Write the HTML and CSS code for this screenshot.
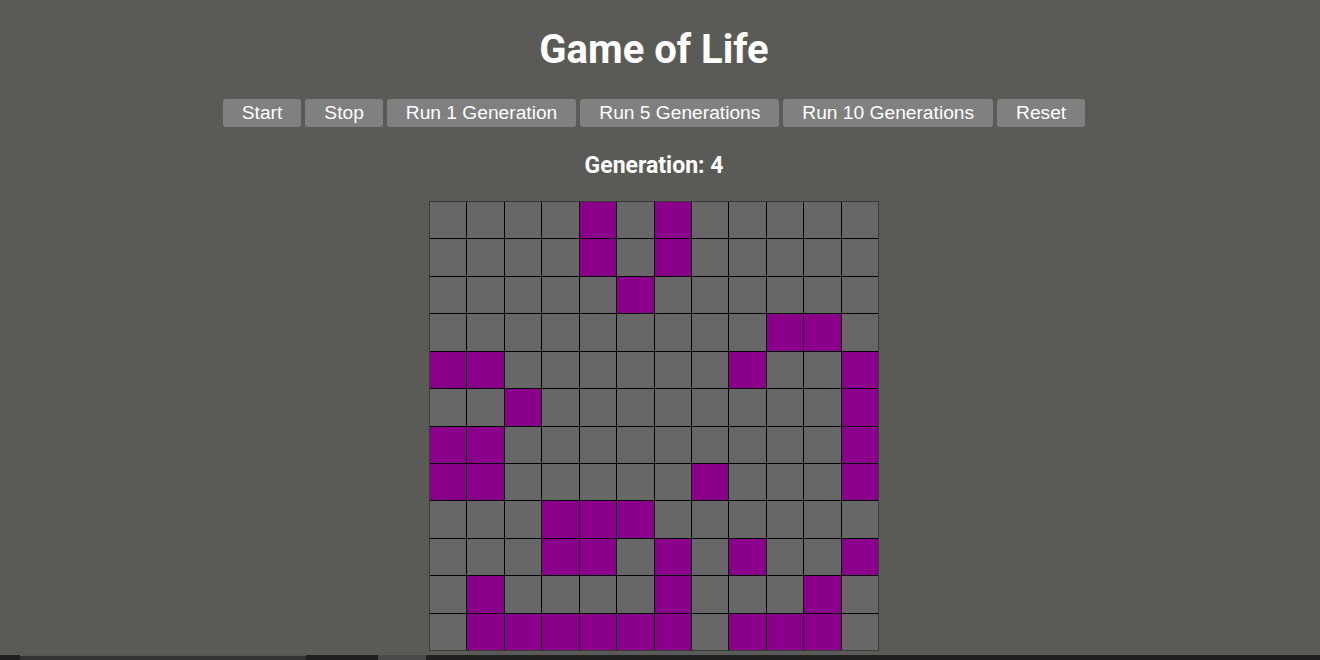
FILE: index.html
```html
<!DOCTYPE html>
<html lang="en">
<head>
<meta charset="utf-8">
<title>Game of Life</title>
<link rel="stylesheet" href="styles.css">
</head>
<body>
<div class="app">
  <h1 class="title">Game of Life</h1>
  <div class="controls">
    <button class="btn">Start</button>
    <button class="btn">Stop</button>
    <button class="btn">Run 1 Generation</button>
    <button class="btn">Run 5 Generations</button>
    <button class="btn">Run 10 Generations</button>
    <button class="btn">Reset</button>
  </div>
  <h3 class="generation">Generation: 4</h3>
  <div class="board">
    <div class="c"></div><div class="c"></div><div class="c"></div><div class="c"></div><div class="c on"></div><div class="c"></div><div class="c on"></div><div class="c"></div><div class="c"></div><div class="c"></div><div class="c"></div><div class="c"></div>
    <div class="c"></div><div class="c"></div><div class="c"></div><div class="c"></div><div class="c on"></div><div class="c"></div><div class="c on"></div><div class="c"></div><div class="c"></div><div class="c"></div><div class="c"></div><div class="c"></div>
    <div class="c"></div><div class="c"></div><div class="c"></div><div class="c"></div><div class="c"></div><div class="c on"></div><div class="c"></div><div class="c"></div><div class="c"></div><div class="c"></div><div class="c"></div><div class="c"></div>
    <div class="c"></div><div class="c"></div><div class="c"></div><div class="c"></div><div class="c"></div><div class="c"></div><div class="c"></div><div class="c"></div><div class="c"></div><div class="c on"></div><div class="c on"></div><div class="c"></div>
    <div class="c on"></div><div class="c on"></div><div class="c"></div><div class="c"></div><div class="c"></div><div class="c"></div><div class="c"></div><div class="c"></div><div class="c on"></div><div class="c"></div><div class="c"></div><div class="c on"></div>
    <div class="c"></div><div class="c"></div><div class="c on"></div><div class="c"></div><div class="c"></div><div class="c"></div><div class="c"></div><div class="c"></div><div class="c"></div><div class="c"></div><div class="c"></div><div class="c on"></div>
    <div class="c on"></div><div class="c on"></div><div class="c"></div><div class="c"></div><div class="c"></div><div class="c"></div><div class="c"></div><div class="c"></div><div class="c"></div><div class="c"></div><div class="c"></div><div class="c on"></div>
    <div class="c on"></div><div class="c on"></div><div class="c"></div><div class="c"></div><div class="c"></div><div class="c"></div><div class="c"></div><div class="c on"></div><div class="c"></div><div class="c"></div><div class="c"></div><div class="c on"></div>
    <div class="c"></div><div class="c"></div><div class="c"></div><div class="c on"></div><div class="c on"></div><div class="c on"></div><div class="c"></div><div class="c"></div><div class="c"></div><div class="c"></div><div class="c"></div><div class="c"></div>
    <div class="c"></div><div class="c"></div><div class="c"></div><div class="c on"></div><div class="c on"></div><div class="c"></div><div class="c on"></div><div class="c"></div><div class="c on"></div><div class="c"></div><div class="c"></div><div class="c on"></div>
    <div class="c"></div><div class="c on"></div><div class="c"></div><div class="c"></div><div class="c"></div><div class="c"></div><div class="c on"></div><div class="c"></div><div class="c"></div><div class="c"></div><div class="c on"></div><div class="c"></div>
    <div class="c"></div><div class="c on"></div><div class="c on"></div><div class="c on"></div><div class="c on"></div><div class="c on"></div><div class="c on"></div><div class="c"></div><div class="c on"></div><div class="c on"></div><div class="c on"></div><div class="c"></div>
  </div>
</div>
<div class="strip">
  <span class="seg seg-a"></span>
  <span class="seg seg-b"></span>
</div>
</body>
</html>
```
FILE: styles.css
```css
html, body {
  margin: 0;
  padding: 0;
  background: #5a5b56;
}

body {
  font-family: Roboto, "Liberation Sans", sans-serif;
  color: #fff;
}

.app {
  display: flex;
  flex-direction: column;
  align-items: center;
  padding-right: 12px;
}

.title {
  margin: 0;
  padding-top: 26px;
  font-size: 40px;
  line-height: 47px;
  font-weight: 700;
}

.controls {
  display: flex;
  gap: 4px;
  margin-top: 26px;
}

.btn {
  font-family: "Liberation Sans", Arial, sans-serif;
  font-size: 19.2px;
  line-height: 28px;
  height: 28px;
  padding: 0 19px;
  border: none;
  border-radius: 3px;
  background: #808080;
  color: #fff;
}

.generation {
  margin: 24px 0 0;
  font-size: 23px;
  line-height: 30px;
  font-weight: 700;
}

.board {
  margin-top: 20px;
  width: 450px;
  height: 450px;
  box-sizing: border-box;
  display: grid;
  grid-template-columns: repeat(12, 1fr);
  grid-template-rows: repeat(12, 1fr);
  gap: 1px;
  background: #000;
  border: 1px solid #3a3a3a;
}

.c {
  background: #676767;
}

.c.on {
  background: #8b008b;
}

.strip {
  margin-top: 4px;
  height: 16px;
  background: #1f201d;
  display: flex;
}

.seg {
  display: block;
  height: 100%;
}

.seg-a {
  margin-left: 20px;
  width: 286px;
  background: #333;
  border-top: 1px solid #555;
  box-sizing: border-box;
}

.seg-b {
  margin-left: 72px;
  width: 48px;
  background: #4a4a4a;
}
```
